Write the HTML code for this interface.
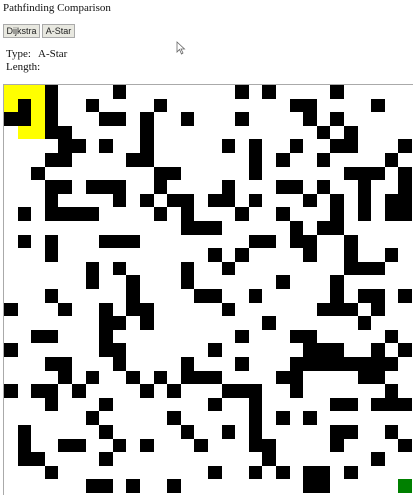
<!DOCTYPE html>
<html><head><meta charset="utf-8"><style>
html,body{margin:0;padding:0;background:#fff;width:413px;height:494px;overflow:hidden;font-family:"Liberation Serif",serif;color:#111}
.t{position:absolute;font-size:11px;white-space:nowrap}
.b{position:absolute;top:24px;height:12px;background:#e8e8e0;border:1px solid #aaa;font-family:"Liberation Sans",sans-serif;font-size:9px;line-height:12px;text-align:center;color:#222}
#g{position:absolute;left:3px;top:84px;width:410px;height:410px;border-left:1px solid #aaa;border-top:1px solid #aaa;background:#fff}
#g div{position:absolute;width:13.7px;height:13.7px}
</style></head><body>
<div class="t" style="left:3px;top:2px">Pathfinding Comparison</div>
<div class="b" style="left:3px;width:35px">Dijkstra</div>
<div class="b" style="left:42px;width:31px">A-Star</div>
<div class="t" style="left:6px;top:48px">Type:</div>
<div class="t" style="left:38px;top:48px">A-Star</div>
<div class="t" style="left:6px;top:61px">Length:</div>
<svg style="position:absolute;left:176px;top:41px" width="10" height="14"><path d="M1 1 L1 11 L3.5 8.5 L5.5 13 L7 12 L5 8 L8.5 8 Z" fill="#fff" stroke="#666" stroke-width="0.8"/></svg>
<div id="g"></div>
<script>
var B={
0:[3,8,17,19,24],
1:[1,3,6,11,21,22,27],
2:[0,1,3,7,8,10,13,17,22,24],
3:[3,4,10,23,25],
4:[4,5,7,10,16,18,21,24,25,29],
5:[3,4,9,10,18,20,23,28],
6:[2,11,12,18,25,26,27,29],
7:[3,4,6,7,8,11,16,20,21,23,26,29],
8:[3,8,10,12,13,15,16,18,22,24,26,28,29],
9:[1,3,4,5,6,11,13,17,20,24,26,28,29],
10:[13,14,15,21,23,24],
11:[1,3,7,8,9,18,19,21,22,25],
12:[3,15,17,22,25,28],
13:[6,8,13,16,25,26,27],
14:[6,9,13,20,24],
15:[3,9,14,15,18,24,26,27,29],
16:[0,4,7,9,10,16,23,24,25,27],
17:[7,8,10,19,26],
18:[2,3,7,17,21,22,28],
19:[0,7,8,15,22,23,24,27,29],
20:[3,4,8,13,17,21,22,23,24,25,26,27,28],
21:[4,6,9,11,13,14,15,20,21,26,27],
22:[0,2,3,5,10,12,16,17,18,21,28],
23:[3,7,15,18,24,25,27,28,29],
24:[6,12,18,20,22],
25:[1,7,13,16,18,24,25,28],
26:[1,4,5,8,10,14,18,19,24,29],
27:[1,2,7,19,27],
28:[3,15,18,20,22,23,25],
29:[6,7,9,12,22,23]};
var Y=[[0,0],[0,1],[0,2],[1,0],[1,2],[2,2],[3,1],[3,2]];
var g=document.getElementById('g'),h='',s=13.6;
function c(r,k,col){h+='<div style="left:'+(k*s).toFixed(1)+'px;top:'+(r*s).toFixed(1)+'px;background:'+col+'"></div>';}
Y.forEach(function(p){c(p[0],p[1],'#ffff00');});
for(var r in B)B[r].forEach(function(k){c(+r,k,'#000');});
c(29,29,'#008000');
g.innerHTML=h;
</script>
</body></html>
